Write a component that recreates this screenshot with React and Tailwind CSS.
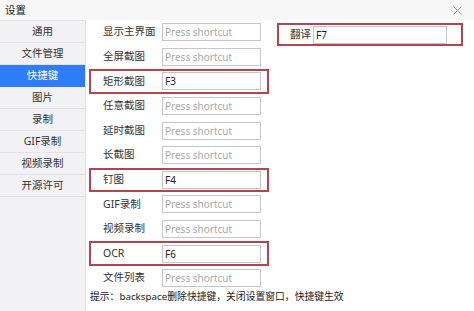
const FONT = { fontFamily: '"Noto Sans", "Noto Sans CJK SC", sans-serif' }

const MENU = ['通用', '文件管理', '快捷键', '图片', '录制', 'GIF录制', '视频录制', '开源许可']

const SHORTCUTS = [
  { label: '显示主界面', value: '' },
  { label: '全屏截图', value: '' },
  { label: '矩形截图', value: 'F3', marked: true },
  { label: '任意截图', value: '' },
  { label: '延时截图', value: '' },
  { label: '长截图', value: '' },
  { label: '钉图', value: 'F4', marked: true },
  { label: 'GIF录制', value: '' },
  { label: '视频录制', value: '' },
  { label: 'OCR', value: 'F6', marked: true },
  { label: '文件列表', value: '' }
]

function KeyInput({ value, className }) {
  return (
    <input
      readOnly
      value={value}
      placeholder="Press shortcut"
      className={`h-[18px] border border-[#c6c6c6] bg-white px-[2px] text-[10px] leading-none text-[#222] outline-none placeholder:text-[#a9a9a9] ${className}`}
    />
  )
}

export default function App() {
  return (
    <div className="flex h-[311px] w-[474px] flex-col overflow-hidden bg-white text-[#333]" style={FONT}>
      {/* Title bar */}
      <div className="flex h-[20px] shrink-0 items-center justify-between bg-[#f7f7f7] pl-[5px] pr-[12px]">
        <span className="text-[10.5px] leading-none text-[#222]">设置</span>
        <svg width="9" height="9" viewBox="0 0 9 9" className="mt-[1px]">
          <path d="M0.5 0.5 L8.5 8.5 M8.5 0.5 L0.5 8.5" stroke="#8a8a8a" strokeWidth="0.9" fill="none" />
        </svg>
      </div>

      <div className="flex flex-1">
        {/* Sidebar */}
        <div className="w-[86px] shrink-0 border-r border-t border-[#e2e2e4] bg-[#f2f2f4]">
          {MENU.map((item) => (
            <div
              key={item}
              className={`flex h-[22px] items-center justify-center border-b text-[10.5px] ${
                item === '快捷键' ? 'border-[#2f7cf6] bg-[#2f7cf6] text-white' : 'border-[#e2e2e4] text-[#333]'
              }`}
            >
              {item}
            </div>
          ))}
        </div>

        {/* Content */}
        <div className="flex flex-1 flex-col">
          <div className="flex">
            <div className="ml-[3px] flex w-[180px] flex-col">
              {SHORTCUTS.map((s) => (
                <div
                  key={s.label}
                  className={`flex h-[24.6px] items-center border-2 pl-[12px] ${
                    s.marked ? 'border-[#b8434f]' : 'border-transparent'
                  }`}
                >
                  <span className="w-[59px] shrink-0 text-[10.5px]">{s.label}</span>
                  <KeyInput value={s.value} className="w-[99px]" />
                </div>
              ))}
            </div>

            {/* Translate */}
            <div className="ml-[8px] mt-[3px] flex h-[23px] w-[186px] items-center border-2 border-[#b8434f] pl-[11px]">
              <span className="mr-[2px] text-[10.5px]">翻译</span>
              <KeyInput value="F7" className="w-[134px]" />
            </div>
          </div>

          <p className="ml-[4px] text-[9.8px] leading-[12px] text-[#222]">
            提示：backspace删除快捷键，关闭设置窗口，快捷键生效
          </p>
        </div>
      </div>
    </div>
  )
}
